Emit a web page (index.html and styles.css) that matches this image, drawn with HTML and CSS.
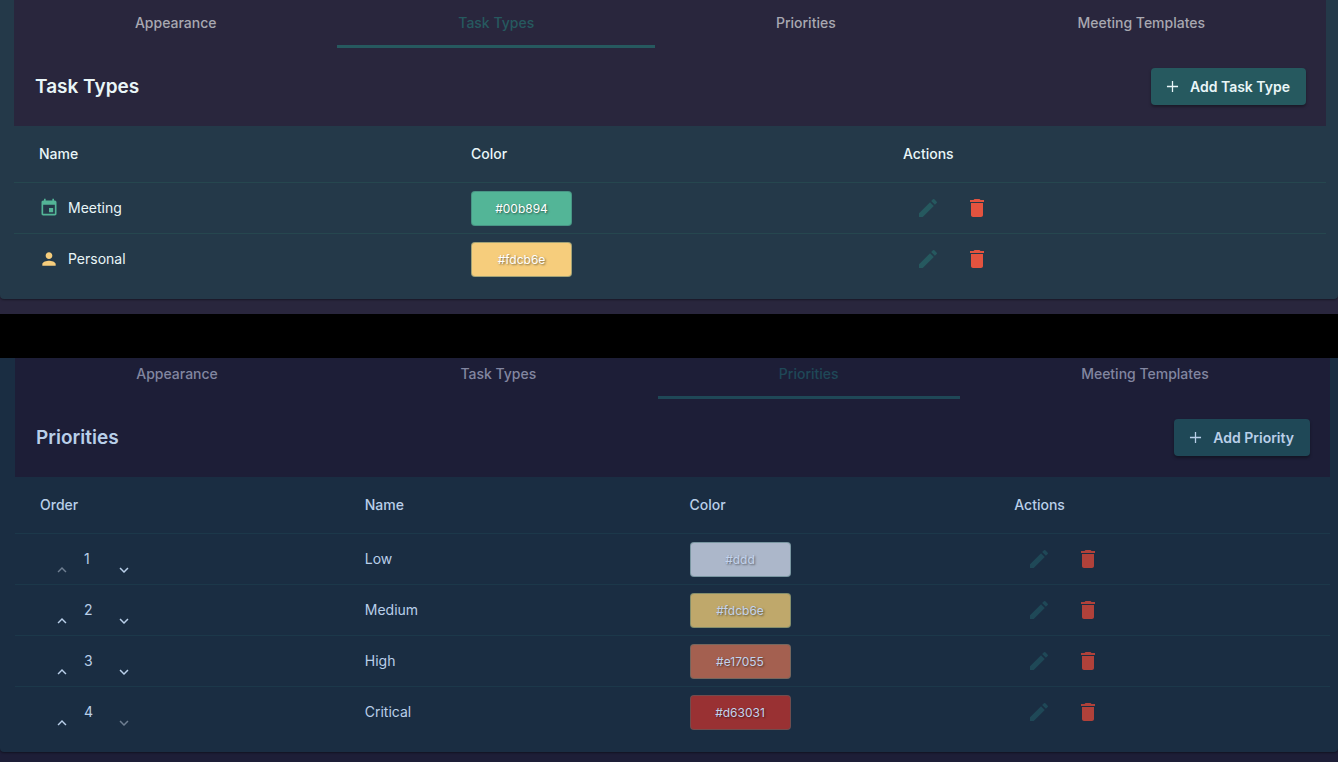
FILE: index.html
```html
<!DOCTYPE html>
<html lang="en">
<head>
<meta charset="utf-8">
<title>Settings</title>
<link rel="stylesheet" href="styles.css">
</head>
<body>
<svg class="sprite" aria-hidden="true">
  <symbol id="plus" viewBox="0 0 24 24"><path d="M19 12.8h-6.2V19h-1.6v-6.2H5v-1.6h6.200V5h1.6v6.200H19z"/></symbol>
  <symbol id="event" viewBox="0 0 24 24"><path d="M17 12h-5v5h5v-5zM16 1v2H8V1H6v2H5c-1.11 0-1.99.9-1.99 2L3 19c0 1.1.89 2 2 2h14c1.1 0 2-.9 2-2V5c0-1.1-.9-2-2-2h-1V1h-2zm3 18H5V8h14v11z"/></symbol>
  <symbol id="person" viewBox="0 0 24 24"><path d="M12 12c2.21 0 4-1.79 4-4s-1.79-4-4-4-4 1.79-4 4 1.79 4 4 4zm0 2c-2.67 0-8 1.34-8 4v2h16v-2c0-2.66-5.33-4-8-4z"/></symbol>
  <symbol id="edit" viewBox="0 0 24 24"><path d="M3 17.25V21h3.75L17.81 9.94l-3.75-3.75L3 17.25zM20.71 7.04a1 1 0 0 0 0-1.41l-2.34-2.34a1 1 0 0 0-1.41 0l-1.83 1.83 3.75 3.75 1.83-1.83z"/></symbol>
  <symbol id="trash" viewBox="0 0 24 24"><path d="M6 19c0 1.1.9 2 2 2h8c1.1 0 2-.9 2-2V7H6v12zM19 4h-3.5l-1-1h-5l-1 1H5v2h14V4z"/></symbol>
  <symbol id="up" viewBox="0 0 24 24"><path d="M7.41 15.41L12 10.83l4.59 4.58L18 14l-6-6-6 6z"/></symbol>
  <symbol id="down" viewBox="0 0 24 24"><path d="M7.41 8.59L12 13.17l4.59-4.58L18 10l-6 6-6-6z"/></symbol>
</svg>

<section class="panel panel-types">
  <div class="card">
    <div class="top">
      <nav class="tabs">
        <button class="tab">Appearance</button>
        <button class="tab active">Task Types</button>
        <button class="tab">Priorities</button>
        <button class="tab">Meeting Templates</button>
      </nav>
      <header class="head">
        <h2>Task Types</h2>
        <button class="add"><svg><use href="#plus"/></svg>Add Task Type</button>
      </header>
    </div>
    <table>
      <thead>
        <tr><th>Name</th><th>Color</th><th>Actions</th></tr>
      </thead>
      <tbody>
        <tr>
          <td><svg class="type-icon green"><use href="#event"/></svg>Meeting</td>
          <td><span class="chip green-bg">#00b894</span></td>
          <td><button class="icon edit" aria-label="Edit"><svg><use href="#edit"/></svg></button><button class="icon del" aria-label="Delete"><svg><use href="#trash"/></svg></button></td>
        </tr>
        <tr>
          <td><svg class="type-icon yellow"><use href="#person"/></svg>Personal</td>
          <td><span class="chip yellow-bg">#fdcb6e</span></td>
          <td><button class="icon edit" aria-label="Edit"><svg><use href="#edit"/></svg></button><button class="icon del" aria-label="Delete"><svg><use href="#trash"/></svg></button></td>
        </tr>
      </tbody>
    </table>
  </div>
</section>

<section class="panel panel-priorities">
  <div class="card">
    <div class="top">
      <nav class="tabs">
        <button class="tab">Appearance</button>
        <button class="tab">Task Types</button>
        <button class="tab active">Priorities</button>
        <button class="tab">Meeting Templates</button>
      </nav>
      <header class="head">
        <h2>Priorities</h2>
        <button class="add"><svg><use href="#plus"/></svg>Add Priority</button>
      </header>
    </div>
    <table>
      <thead>
        <tr><th>Order</th><th>Name</th><th>Color</th><th>Actions</th></tr>
      </thead>
      <tbody>
        <tr>
          <td><button class="move" aria-label="Move up" disabled><svg><use href="#up"/></svg></button><span class="order">1</span><button class="move" aria-label="Move down"><svg><use href="#down"/></svg></button></td>
          <td>Low</td>
          <td><span class="chip low-bg">#ddd</span></td>
          <td><button class="icon edit" aria-label="Edit"><svg><use href="#edit"/></svg></button><button class="icon del" aria-label="Delete"><svg><use href="#trash"/></svg></button></td>
        </tr>
        <tr>
          <td><button class="move" aria-label="Move up"><svg><use href="#up"/></svg></button><span class="order">2</span><button class="move" aria-label="Move down"><svg><use href="#down"/></svg></button></td>
          <td>Medium</td>
          <td><span class="chip medium-bg">#fdcb6e</span></td>
          <td><button class="icon edit" aria-label="Edit"><svg><use href="#edit"/></svg></button><button class="icon del" aria-label="Delete"><svg><use href="#trash"/></svg></button></td>
        </tr>
        <tr>
          <td><button class="move" aria-label="Move up"><svg><use href="#up"/></svg></button><span class="order">3</span><button class="move" aria-label="Move down"><svg><use href="#down"/></svg></button></td>
          <td>High</td>
          <td><span class="chip high-bg">#e17055</span></td>
          <td><button class="icon edit" aria-label="Edit"><svg><use href="#edit"/></svg></button><button class="icon del" aria-label="Delete"><svg><use href="#trash"/></svg></button></td>
        </tr>
        <tr>
          <td><button class="move" aria-label="Move up"><svg><use href="#up"/></svg></button><span class="order">4</span><button class="move" aria-label="Move down" disabled><svg><use href="#down"/></svg></button></td>
          <td>Critical</td>
          <td><span class="chip critical-bg">#d63031</span></td>
          <td><button class="icon edit" aria-label="Edit"><svg><use href="#edit"/></svg></button><button class="icon del" aria-label="Delete"><svg><use href="#trash"/></svg></button></td>
        </tr>
      </tbody>
    </table>
  </div>
</section>
</body>
</html>
```
FILE: styles.css
```css
* { box-sizing: border-box; }

body {
  margin: 0;
  background: #000;
  font-family: Inter, "Liberation Sans", sans-serif;
  font-size: 14px;
  line-height: 18px;
  display: flex;
  flex-direction: column;
  gap: 44px;
}

button {
  border: 0;
  padding: 0;
  background: none;
  color: inherit;
  font: inherit;
  cursor: pointer;
}

svg { fill: currentColor; flex: none; }
.sprite { display: none; }

.panel { background: var(--page); color: var(--text); }

.panel-types {
  --page: #29263d;
  --surface: #243949;
  --line: #26474f;
  --accent: #26595f;
  --text: #e9f6f8;
  --muted: #a8a8b1;
  --danger: #e3533f;
  --chip-text: #fff;
  padding-bottom: 15px;
}

.panel-priorities {
  --page: #1d1e37;
  --surface: #1a2d42;
  --line: #1c384a;
  --accent: #1f4857;
  --text: #b9cfe9;
  --muted: #8286a0;
  --danger: #b0413a;
  --chip-text: #c3d3ec;
  padding-bottom: 10px;
}

.card {
  background: var(--surface);
  border-radius: 0 0 4px 4px;
  box-shadow: 0 1px 2px rgba(0, 0, 0, 0.4);
}
.panel-types .card { padding: 0 12px 15px 14px; }
.panel-priorities .card { padding: 0 8px 15px 15px; }

.top { background: var(--page); }

.tabs { display: flex; }
.tab {
  flex: 1 1 auto;
  padding: 14px 0 13px;
  border-bottom: 3px solid transparent;
  font-weight: 500;
  color: var(--muted);
}
.panel-priorities .tab { padding-top: 7px; }
.tab.active { color: var(--accent); border-color: var(--accent); }

.head {
  display: flex;
  align-items: center;
  justify-content: space-between;
  padding: 20px 20px 21px 21px;
}
h2 { margin: 0; font-size: 19px; line-height: 24px; font-weight: 600; }

.add {
  display: flex;
  align-items: center;
  gap: 8px;
  height: 37px;
  padding: 0 16px 0 12px;
  border-radius: 4px;
  background: var(--accent);
  box-shadow: 0 2px 3px rgba(0, 0, 0, 0.35);
  font-weight: 600;
}
.add svg { width: 19px; height: 19px; }

table { display: block; }
thead, tbody { display: block; }
tr { display: flex; padding: 0 7px 0 9px; border-bottom: 1px solid var(--line); }
tbody tr:last-child { border-bottom: 0; }
th, td {
  flex: 1 1 0;
  display: flex;
  align-items: center;
  padding: 0 16px;
}
th { height: 56px; font-weight: 500; }
td { height: 50px; }

.type-icon { width: 20px; height: 20px; margin-right: 9px; }
.green { color: #53b597; }
.yellow { color: #f6cd7c; }

.chip {
  min-width: 101px;
  padding: 8px 16px;
  border: 1px solid rgba(60, 110, 110, 0.45);
  border-radius: 4px;
  font-size: 12px;
  line-height: 17px;
  text-align: center;
  color: var(--chip-text);
  text-shadow: 1px 1px 2px rgba(0, 0, 0, 0.5);
}
.green-bg { background: #53b597; }
.yellow-bg { background: #f6cd7c; }
.low-bg { background: #acb7ca; }
.medium-bg { background: #bfa86b; }
.high-bg { background: #a46050; }
.critical-bg { background: #993133; }

.icon {
  display: flex;
  align-items: center;
  justify-content: center;
  width: 49px;
  height: 50px;
}
.icon svg { width: 24px; height: 24px; }
.edit { color: var(--accent); }
.del { color: var(--danger); }

.move {
  display: flex;
  justify-content: center;
  align-items: flex-end;
  width: 44px;
  height: 50px;
  padding-bottom: 5px;
}
.move svg { width: 18px; height: 18px; }
.move:disabled { color: #6f7f92; }
.order { width: 18px; }
```
